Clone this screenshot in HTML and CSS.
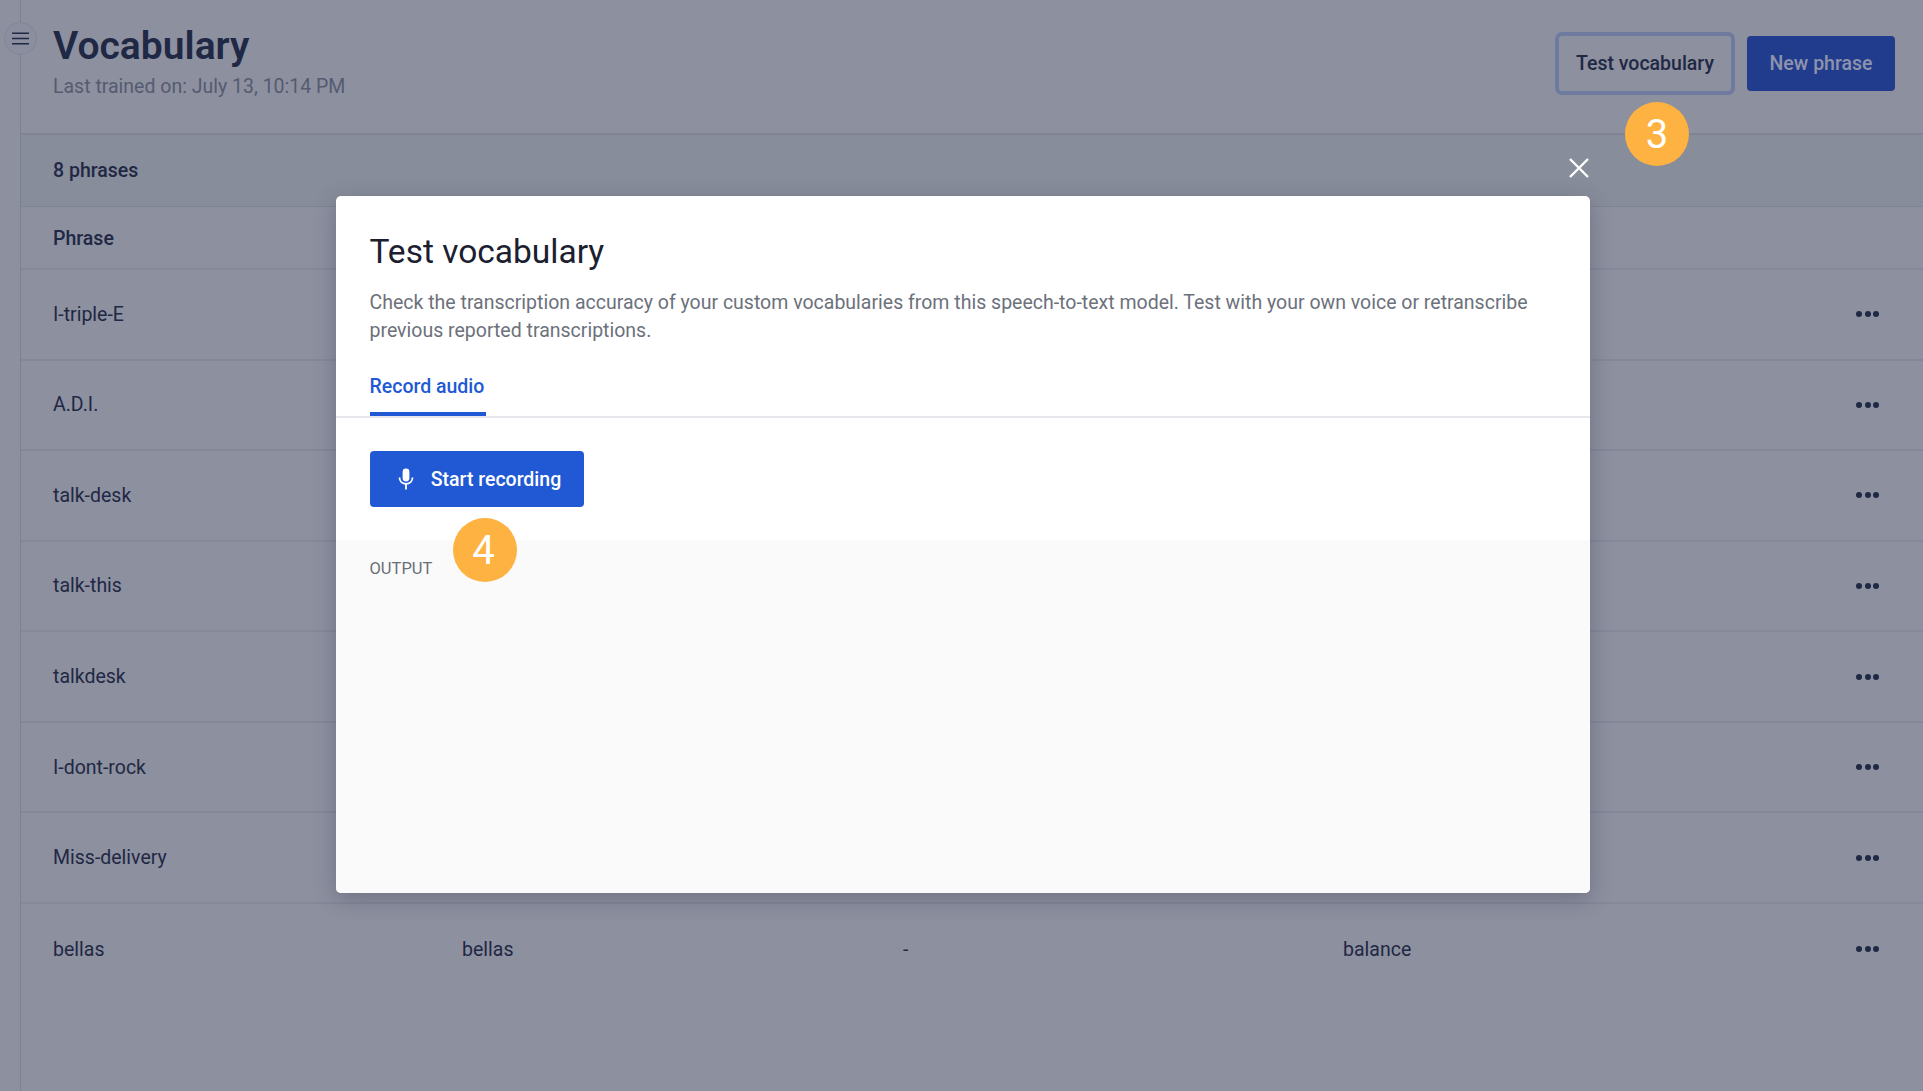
FILE: index.html
```html
<!DOCTYPE html>
<html lang="en">
<head>
<meta charset="utf-8">
<title>Vocabulary</title>
<link rel="stylesheet" href="styles.css">
</head>
<body>
<div class="app">
  <aside class="rail"></aside>
  <main class="main">
    <header class="head">
      <div class="head-text">
        <h1 class="title">Vocabulary</h1>
        <p class="sub">Last trained on: July 13, 10:14 PM</p>
      </div>
      <div class="head-actions">
        <button class="btn btn-outline">Test vocabulary</button>
        <button class="btn btn-solid-dim">New phrase</button>
      </div>
    </header>
    <div class="count">8 phrases</div>
    <div class="row row-head"><span>Phrase</span></div>
    <div class="row"><span>I-triple-E</span><span></span><span></span><span></span><span class="dots"><i></i><i></i><i></i></span></div>
    <div class="row"><span>A.D.I.</span><span></span><span></span><span></span><span class="dots"><i></i><i></i><i></i></span></div>
    <div class="row"><span>talk-desk</span><span></span><span></span><span></span><span class="dots"><i></i><i></i><i></i></span></div>
    <div class="row"><span>talk-this</span><span></span><span></span><span></span><span class="dots"><i></i><i></i><i></i></span></div>
    <div class="row"><span>talkdesk</span><span></span><span></span><span></span><span class="dots"><i></i><i></i><i></i></span></div>
    <div class="row"><span>I-dont-rock</span><span></span><span></span><span></span><span class="dots"><i></i><i></i><i></i></span></div>
    <div class="row"><span>Miss-delivery</span><span></span><span></span><span></span><span class="dots"><i></i><i></i><i></i></span></div>
    <div class="row row-last"><span>bellas</span><span>bellas</span><span>-</span><span>balance</span><span class="dots"><i></i><i></i><i></i></span></div>
  </main>
</div>

<button class="menu-toggle" aria-label="Menu">
  <svg width="17" height="13" viewBox="0 0 17 13"><path d="M0 1.2h17M0 6.5h17M0 11.8h17" stroke="#1f2844" stroke-width="1.5" fill="none"/></svg>
</button>

<button class="close" aria-label="Close">
  <svg width="20" height="20" viewBox="0 0 20 20"><path d="M1 1l18 18M19 1L1 19" stroke="#fff" stroke-width="2.4" fill="none"/></svg>
</button>

<section class="modal">
  <div class="modal-top">
    <h2 class="modal-title">Test vocabulary</h2>
    <p class="modal-desc">Check the transcription accuracy of your custom vocabularies from this speech-to-text model. Test with your own voice or retranscribe previous reported transcriptions.</p>
  </div>
  <div class="tabs"><span class="tab">Record audio</span></div>
  <div class="record">
    <button class="btn btn-primary">
      <svg class="mic" width="16" height="22" viewBox="0 0 16 22"><rect x="4.6" y="0.5" width="6.8" height="13" rx="3.4" fill="#fff"/><path d="M1.5 9.5c0 4 2.9 6.3 6.5 6.3s6.5-2.3 6.5-6.3" stroke="#fff" stroke-width="1.8" fill="none"/><path d="M8 15.5v6" stroke="#fff" stroke-width="1.8"/></svg>
      Start recording
    </button>
  </div>
  <div class="output"><span class="output-label">OUTPUT</span></div>
</section>

<div class="badge badge-3">3</div>
<div class="badge badge-4">4</div>
</body>
</html>
```
FILE: styles.css
```css
* { box-sizing: border-box; }
html, body { margin: 0; padding: 0; height: 100%; }
body {
  width: 1923px;
  height: 1091px;
  overflow: hidden;
  position: relative;
  background: #8d909f;
  font-family: Roboto, "Liberation Sans", sans-serif;
  color: #1f2844;
}
.app { display: flex; height: 100%; }
.rail { width: 21px; flex: none; border-right: 1px solid #7d8192; background: #8d909f; }
.main { flex: 1; min-width: 0; }
.head {
  height: 135px;
  padding: 24px 28px 0 32px;
  display: flex;
  justify-content: space-between;
  border-bottom: 2px solid #7f8394;
}
.title { margin: 0; font-size: 39px; line-height: 44px; font-weight: 600; letter-spacing: 0; }
.sub { margin: 6px 0 0; font-size: 19.5px; line-height: 26px; color: #555b70; }
.head-actions { display: flex; align-items: flex-start; gap: 12px; padding-top: 5px; }
.btn {
  font-family: inherit;
  font-size: 19.5px;
  font-weight: 500;
  border-radius: 4px;
  border: 0;
  padding: 0;
  display: flex;
  align-items: center;
  justify-content: center;
}
.btn-outline {
  width: 180px;
  height: 63px;
  margin-top: 3px;
  background: transparent;
  color: #1f2844;
  border: 4px solid #6e7a9e;
  border-radius: 7px;
}
.btn-solid-dim {
  width: 148px;
  height: 55px;
  margin-top: 7px;
  background: #213c8c;
  color: #8d93ad;
}
.count {
  height: 72px;
  padding-left: 32px;
  display: flex;
  align-items: center;
  font-size: 19.5px;
  font-weight: 500;
  background: #888d9b;
  border-bottom: 1px solid #7f8394;
}
.row {
  height: 90.57px;
  padding: 0 0 0 32px;
  display: grid;
  grid-template-columns: 409px 441px 440px 1fr 67px;
  align-items: center;
  font-size: 19.5px;
  border-bottom: 2px solid #858899;
}
.row-head { height: 63px; padding-top: 2px; font-weight: 500; }
.row-last { border-bottom: 0; }
.dots { display: flex; gap: 2.5px; }
.dots i { width: 6px; height: 6px; border-radius: 50%; background: #1f2844; }
.menu-toggle {
  position: absolute;
  left: 4px;
  top: 22px;
  width: 33px;
  height: 33px;
  padding: 0;
  border-radius: 50%;
  border: 1px solid #81859a;
  background: #8b8e9e;
  display: flex;
  align-items: center;
  justify-content: center;
}
.close {
  position: absolute;
  left: 1569px;
  top: 158px;
  width: 20px;
  height: 20px;
  padding: 0;
  border: 0;
  background: none;
  display: flex;
}
.modal {
  position: absolute;
  left: 336px;
  top: 196px;
  width: 1254px;
  height: 697px;
  background: #fff;
  border-radius: 5px;
  box-shadow: 0 6px 22px rgba(40, 44, 70, .3);
  display: flex;
  flex-direction: column;
  overflow: hidden;
}
.modal-top { padding: 0 33.5px; }
.modal-title { margin: 36px 0 0; font-size: 33.5px; line-height: 40px; font-weight: 400; color: #1b2030; }
.modal-desc { margin: 17px 0 0; font-size: 19.5px; line-height: 28px; color: #6c717b; }
.tabs { margin-top: 22px; padding: 0 33.5px; border-bottom: 2px solid #e7e8ec; height: 51px; }
.tab {
  display: inline-block;
  height: 49px;
  line-height: 40px;
  font-size: 19.5px;
  font-weight: 500;
  color: #2159d4;
  border-bottom: 4px solid #2159d4;
  width: 116px;
}
.record { padding: 33px 33.5px; }
.btn-primary {
  width: 214px;
  height: 56px;
  padding-left: 6px;
  background: #2159d4;
  color: #fff;
  gap: 17px;
}
.output { flex: 1; background: #fafafa; padding: 19px 33.5px; }
.output-label { font-size: 16.5px; line-height: 20px; color: #6a6f78; }
.badge {
  position: absolute;
  width: 64px;
  height: 64px;
  border-radius: 50%;
  background: #fdb241;
  color: #fff;
  font-size: 40px;
  display: flex;
  align-items: center;
  justify-content: center;
}
.badge-3 { left: 1625px; top: 102px; }
.badge-4 { left: 453px; top: 518px; padding-right: 3px; }
```
